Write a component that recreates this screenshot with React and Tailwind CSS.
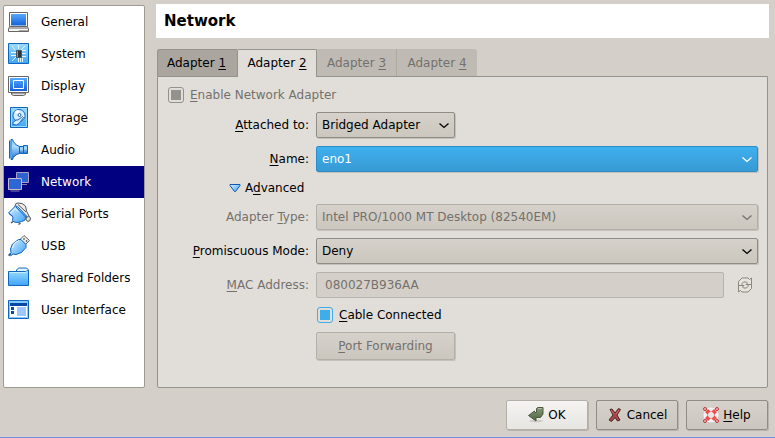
import React from 'react';

const Svg = ({ children, size = 22 }) => (
  <svg width={size} height={size} viewBox={`0 0 ${size} ${size}`} fill="none" aria-hidden="true" className="shrink-0 overflow-visible">
    {children}
  </svg>
);

const Gradients = () => (
  <svg width="0" height="0" className="absolute" aria-hidden="true">
    <defs>
      <linearGradient id="screen" x1="0" y1="0" x2="0" y2="1">
        <stop offset="0" stopColor="#55aaff" />
        <stop offset="1" stopColor="#1560d8" />
      </linearGradient>
      <linearGradient id="sky" x1="0" y1="0" x2="1" y2="1">
        <stop offset="0" stopColor="#d6f1ff" />
        <stop offset="1" stopColor="#3d9ff5" />
      </linearGradient>
      <linearGradient id="cone" x1="0" y1="0" x2="0" y2="1">
        <stop offset="0" stopColor="#7cc4f8" />
        <stop offset=".35" stopColor="#a9dcff" />
        <stop offset="1" stopColor="#1f6fd0" />
      </linearGradient>
      <linearGradient id="folder" x1="0" y1="0" x2="0" y2="1">
        <stop offset="0" stopColor="#9adcff" />
        <stop offset="1" stopColor="#3fa4f7" />
      </linearGradient>
      <linearGradient id="arrow" x1="0" y1="0" x2="0" y2="1">
        <stop offset="0" stopColor="#8a9b78" />
        <stop offset="1" stopColor="#4c6140" />
      </linearGradient>
    </defs>
  </svg>
);

const GeneralIcon = () => (
  <Svg>
    <path d="M1.5 1.5h18v14h-18z" fill="#fff" stroke="#666" />
    <path d="M3 3h15v11.500h-15z" fill="url(#screen)" />
    <path d="M1.500 16h18l1 1.500v3h-20v-3z" fill="#f4f4f4" stroke="#666" />
    <path d="M1 17.500h19M11 19.500h9" stroke="#aaa" />
  </Svg>
);

const SystemIcon = () => (
  <Svg>
    <path d="M.5.5h20v20H.5z" fill="url(#folder)" stroke="#1264bd" />
    <path d="M3 9.500h5M3 12.500h5M13 7.500h5M13 10.500h5M13 13.500h5M10.500 15v4M12.500 15v4M14.500 15v4M4 18l4-4M4 3l3 4M17 3l-4 4M10.500 2v4" stroke="#e4f5ff" />
    <path d="M8.500 7.500h5v7h-5z" fill="#333" stroke="#4a5560" />
    <path d="M9 8h1v6H9z" fill="#a09880" />
  </Svg>
);

const DisplayIcon = () => (
  <Svg>
    <path d="M.5 1.500h20v16H.5z" fill="#fff" stroke="#666" />
    <path d="M2 3h17v13H2z" fill="url(#screen)" />
    <path d="M5.500 5.500h10v8h-10z" stroke="#fff" />
    <path d="M3.500 18h14v1.500l-2 1h-10l-2-1z" fill="#ddd" stroke="#666" />
  </Svg>
);

const StorageIcon = () => (
  <Svg>
    <path d="M2.500.5h17v20h-17z" fill="url(#folder)" stroke="#1264bd" />
    <path d="M3.500 1.500h15v18h-15z" stroke="#9adaff" />
    <circle cx="11" cy="8.500" r="6" fill="#d4edff" stroke="#1767bd" />
    <path d="M11 8.500 6.500 5A5.500 5.500 0 0 1 11 3zM11 8.500h5.500a5.500 5.500 0 0 1-2 4z" fill="#fff" />
    <circle cx="11.500" cy="8" r="1.500" fill="#fff" stroke="#1767bd" />
    <path d="M5 17.500v-2l3-2.500h2l4.500-3.500 1 1-3 4-1.500 2-2.500 1.500z" fill="#d8efff" stroke="#1767bd" />
  </Svg>
);

const AudioIcon = () => (
  <Svg>
    <path d="M11.500 7.500h4v7h-4z" fill="url(#cone)" stroke="#1264bd" />
    <path d="M15.500 6.500h4v8h-4z" fill="url(#cone)" stroke="#1264bd" />
    <path d="M3 .5h1.500c1 3 3 5.500 7 7v7c-4 1-6 3-7 6H3z" fill="url(#cone)" stroke="#1264bd" />
    <path d="M1.500 2h2.500v17H1.500z" fill="#4fa2ec" />
    <path d="M1.500 1.500v18" stroke="#1264bd" />
  </Svg>
);

const NetworkIcon = () => (
  <Svg>
    <path d="M8.500 1.500h12v10h-12z" fill="#2d64d2" stroke="#a5a2c8" />
    <path d="M14 13.500h5" stroke="#8583ac" />
    <path d="M.5 7.500h13v11H.5z" fill="#2f66d6" stroke="#c5b9cc" />
    <path d="M2.500 20h9" stroke="#8583ac" />
  </Svg>
);

const SerialIcon = () => (
  <Svg>
    <path d="M7 3 8 .500 10 0l4 .500 3.500 2.500 1 5 3 6-2 1.500-2-1L7 4z" fill="#eaeaea" stroke="#555" strokeLinejoin="round" />
    <path d="m10 1.500 8 7.500" stroke="#555" />
    <path d="m18 15 2.500-2 2 2-.500 2.500-2 1-2-1.500z" fill="#ddd" stroke="#555" />
    <path d="m.5 10 7-7 2 .500 9 9.500-2 4.500-3 1-3.500 1-4-.500-1.500-1.500.500-3.500z" fill="url(#sky)" stroke="#1264bd" strokeLinejoin="round" />
    <path d="m2.500 10 4.500-4.500 3 3" stroke="#effaff" />
    <path d="m1 10.500 4 3M8 4l9.500 10" stroke="#1264bd" />
    <path d="m3 20 2-1.500M10.500 21.500l2-1.500" stroke="#456" strokeWidth="1.500" />
  </Svg>
);

const UsbIcon = () => (
  <Svg>
    <path d="m12 4.500 4-4 5.500 5-4 4z" fill="#eee" stroke="#666" />
    <path d="m15.500 3.500 1 1M18 5.500l1 1" stroke="#444" strokeWidth="1.500" />
    <path d="M10.500 4.500h2.500l5 5v3l-4.500 5-5.500 2-3-.5-2.500 2-1-1 1.500-2.500-.5-3.500 2-5z" fill="url(#sky)" stroke="#1264bd" />
    <path d="m4.500 13 2-5 4-2" stroke="#f2fbff" />
    <path d="m.5 20.500 2-2" stroke="#164b85" strokeWidth="1.500" />
  </Svg>
);

const FolderIcon = () => (
  <Svg>
    <path d="M8.500 4V3l2-2h8l2 2v2" fill="#e2f5ff" stroke="#1264bd" />
    <path d="M.5 4.500h17l3-1v15H.5z" fill="url(#folder)" stroke="#1264bd" />
    <path d="M1.500 5.500h16l2-1" stroke="#c7edff" />
  </Svg>
);

const UiIcon = () => (
  <Svg>
    <path d="M.5 1.500h20v18H.5z" fill="#fff" stroke="#1264bd" />
    <path d="M1 2h19v2H1z" fill="#85caff" />
    <path d="M1.500 2.500h18v16h-18z" stroke="#85caff" />
    <path d="M2 4h17v3H2z" fill="#0648a5" />
    <path d="M3 8h3v3H3zM3 12h3v3H3z" fill="#0648a5" />
    <path d="M9 8h9v9H9z" fill="#9cc8ff" />
  </Svg>
);

const sections = [
  ['General', GeneralIcon],
  ['System', SystemIcon],
  ['Display', DisplayIcon],
  ['Storage', StorageIcon],
  ['Audio', AudioIcon],
  ['Network', NetworkIcon],
  ['Serial Ports', SerialIcon],
  ['USB', UsbIcon],
  ['Shared Folders', FolderIcon],
  ['User Interface', UiIcon],
];

const Key = ({ children }) => <span className="underline underline-offset-2">{children}</span>;

const Chevron = () => (
  <svg width="10" height="6" viewBox="0 0 10 6" fill="none" aria-hidden="true" className="pointer-events-none absolute top-[10px] right-[5px]">
    <path d="m.5.5 4.500 4 4.500-4" stroke="currentColor" strokeWidth="1.300" />
  </svg>
);

const tones = {
  normal: 'border-[#8f8c85] bg-linear-to-b from-[#d6d2cb] to-[#cbc6be] text-black',
  active: 'border-[#2e8dc9] bg-linear-to-b from-[#40b0ef] to-[#369ad3] text-white',
  disabled: 'border-[#b3afa8] bg-linear-to-b from-[#d6d2cb] to-[#cbc6be] text-[#74716c]',
};

const Combo = ({ id, value, tone = 'normal', width = 'w-full' }) => (
  <div className={`relative ${width} rounded-[2px] border shadow-[1px_1px_0_#c5c1ba] ${tones[tone]}`}>
    <select id={id} disabled={tone === 'disabled'} defaultValue={value} className="block h-6 w-full appearance-none pl-[5px] opacity-100 outline-none">
      <option>{value}</option>
    </select>
    <Chevron />
  </div>
);

const Label = ({ id, muted, children }) => (
  <label htmlFor={id} className={`text-right whitespace-nowrap ${muted ? 'text-[#74716c]' : ''}`}>{children}</label>
);

const OkIcon = () => (
  <Svg size={16}>
    <ellipse cx="8" cy="14" rx="7" ry="1.500" fill="#000" opacity=".12" />
    <path d="M8.500 1.500 10 .5h5v6.500L12.500 10.500H8V14L.5 8.500 6.500 4v1.500h2z" fill="url(#arrow)" stroke="#4a5940" strokeLinejoin="round" />
    <path d="M10 1.500h4" stroke="#adb99f" />
  </Svg>
);

const CancelIcon = () => (
  <Svg size={16}>
    <path d="M3 2.500 5 2l3 4 3.500-4.500 2 1L10 8l3 5-2.500 1L8 10.500 4.500 14.500 2 13l4-5z" fill="#a8474b" stroke="#4f2425" strokeLinejoin="round" />
    <path d="m4 3 3 4M12 3 9 7" stroke="#cd7072" />
  </Svg>
);

const HelpIcon = () => (
  <Svg size={16}>
    <circle cx="8" cy="8" r="5.500" stroke="#f4f2f2" strokeWidth="4" />
    <path d="M2 5 5 2l3 3-3 3zM14 5l-3-3-3 3 3 3zM2 11l3 3 3-3-3-3zM14 11l-3 3-3-3 3-3z" fill="#f04a4a" />
    <circle cx="8" cy="8" r="3" fill="#e9e5e1" />
    <g stroke="#bd3438" fill="#e8c9c6">
      <circle cx="2" cy="2" r="1.500" />
      <circle cx="14" cy="2" r="1.500" />
      <circle cx="2" cy="14" r="1.500" />
      <circle cx="14" cy="14" r="1.500" />
    </g>
  </Svg>
);

const RefreshIcon = () => (
  <Svg size={16}>
    <path d="M4.500 1h6.500l1.500 1.500L14 1v12l-2.500 2H5l-1.500-1.500L1.500 15V4.500z" fill="#e6e4dc" />
    <path d="M1.500 8.500v-4L5 1h6l1.500 1.500L14.500 1v6.500H9L10.500 6 9.500 5h-3L5 6.500v2zM14.500 7.500v4L11 15H5l-1.500-1.500-2 1.500V8.500H7L5.500 10l1 1h3L11 9.500v-2" stroke="#89877f" strokeLinejoin="round" />
  </Svg>
);

const dialogButton =
  'flex h-[30px] w-[82px] items-center justify-center gap-1 rounded-[2px] border shadow-[1px_1px_0_#b9b5ad]';

export default function App() {
  return (
    <div className="flex min-h-screen flex-col border-b border-[#6f93d3] bg-[#d4cfc8] font-['DejaVu_Sans',sans-serif] text-[12px] leading-4 text-black">
      <Gradients />
      <div className="flex flex-1 gap-[11px] pt-1 pr-[6px] pl-[3px]">
        <nav aria-label="Settings" className="mt-px w-[142px] shrink-0 rounded-[2px] border border-[#9c9a91] bg-white">
          <ul>
            {sections.map(([name, Icon]) => (
              <li key={name}>
                <a
                  href="#section"
                  aria-current={name === 'Network' ? 'page' : undefined}
                  className={`flex h-8 items-center gap-[11px] pl-1 ${name === 'Network' ? 'bg-[#000080] text-white' : ''}`}
                >
                  <Icon />
                  {name}
                </a>
              </li>
            ))}
          </ul>
        </nav>

        <main className="flex min-w-0 flex-1 flex-col">
          <h1 className="h-[34px] bg-white pl-2 text-[15px] leading-[34px] font-bold">Network</h1>

          <div role="tablist" className="mt-[11px] ml-px flex h-[27px]">
            <button role="tab" aria-selected="false" className="w-20 rounded-tl-[3px] border-t border-l border-[#96938c] bg-[#aaa69f] pr-[2px]">
              Adapter <Key>1</Key>
            </button>
            <button role="tab" aria-selected="true" className="z-10 -mb-px w-20 rounded-t-[2px] border-x border-t border-[#96938c] bg-[#e1deda] pb-px">
              Adapter <Key>2</Key>
            </button>
            <button role="tab" aria-selected="false" disabled className="w-20 border-r border-[#aeaaa3] bg-[#bfbbb4] text-[#74716c]">
              Adapter <Key>3</Key>
            </button>
            <button role="tab" aria-selected="false" disabled className="w-20 rounded-tr-[3px] bg-[#bfbbb4] text-[#74716c]">
              Adapter <Key>4</Key>
            </button>
          </div>

          <section className="mr-px ml-px flex-1 rounded-b-[2px] border border-[#96938c] bg-[#e1deda] pt-[10px] pr-[9px] pb-[26px] pl-[10px]">
            <div className="flex items-center gap-[6px] text-[#74716c]">
              <input id="enable" type="checkbox" disabled defaultChecked className="size-4 appearance-none rounded-[3px] border border-[#93918b] bg-[#93918b] bg-clip-content p-[2px]" />
              <label htmlFor="enable"><Key>E</Key>nable Network Adapter</label>
            </div>

            <div className="mt-[9px] grid grid-cols-[141px_minmax(0,1fr)] items-center gap-x-[7px] gap-y-2">
              <Label id="attached"><Key>A</Key>ttached to:</Label>
              <Combo id="attached" value="Bridged Adapter" width="w-[139px]" />

              <Label id="name"><Key>N</Key>ame:</Label>
              <Combo id="name" value="eno1" tone="active" />

              <button aria-expanded="true" className="col-span-2 flex items-center gap-1 pl-[61px]">
                <svg width="12" height="10" viewBox="0 0 12 10" aria-hidden="true">
                  <path d="M1 1.500h10v1L6.500 8.500h-1L1 2.500z" fill="url(#sky)" stroke="#0e56b0" strokeLinejoin="round" />
                </svg>
                <span>A<Key>d</Key>vanced</span>
              </button>

              <Label id="type" muted>Adapter <Key>T</Key>ype:</Label>
              <Combo id="type" value="Intel PRO/1000 MT Desktop (82540EM)" tone="disabled" />

              <Label id="mode"><Key>P</Key>romiscuous Mode:</Label>
              <Combo id="mode" value="Deny" />

              <Label id="mac" muted><Key>M</Key>AC Address:</Label>
              <div className="flex items-center gap-[13px] pr-[5px]">
                <input id="mac" disabled defaultValue="080027B936AA" className="h-[26px] min-w-0 flex-1 rounded-[2px] border border-[#b7b3ac] bg-[#d4cfc8] px-2 text-[#74716c]" />
                <button disabled aria-label="Generate MAC address"><RefreshIcon /></button>
              </div>

              <div className="col-start-2 flex items-center gap-[6px] py-px pl-px">
                <input id="cable" type="checkbox" defaultChecked className="size-4 appearance-none rounded-[3px] border border-[#3daee9] bg-[#3daee9] bg-clip-content p-[2px]" />
                <label htmlFor="cable"><Key>C</Key>able Connected</label>
              </div>

              <button disabled className="col-start-2 h-7 w-[139px] rounded-[2px] border border-[#b3afa8] bg-linear-to-b from-[#d6d2cb] to-[#cbc6be] text-[#74716c] shadow-[1px_1px_0_#c5c1ba]">
                <Key>P</Key>ort Forwarding
              </button>
            </div>
          </section>
        </main>
      </div>

      <footer className="flex justify-end gap-2 pt-3 pr-[7px] pb-[7px]">
        <button className={`${dialogButton} border-[#b3afa8] bg-linear-to-b from-[#f5f4f2] to-[#e7e5e2]`}><OkIcon />OK</button>
        <button className={`${dialogButton} border-[#908d86] bg-linear-to-b from-[#d6d2cb] to-[#cbc6be]`}><CancelIcon />Cancel</button>
        <button className={`${dialogButton} border-[#908d86] bg-linear-to-b from-[#d6d2cb] to-[#cbc6be]`}><HelpIcon /><span><Key>H</Key>elp</span></button>
      </footer>
    </div>
  );
}
